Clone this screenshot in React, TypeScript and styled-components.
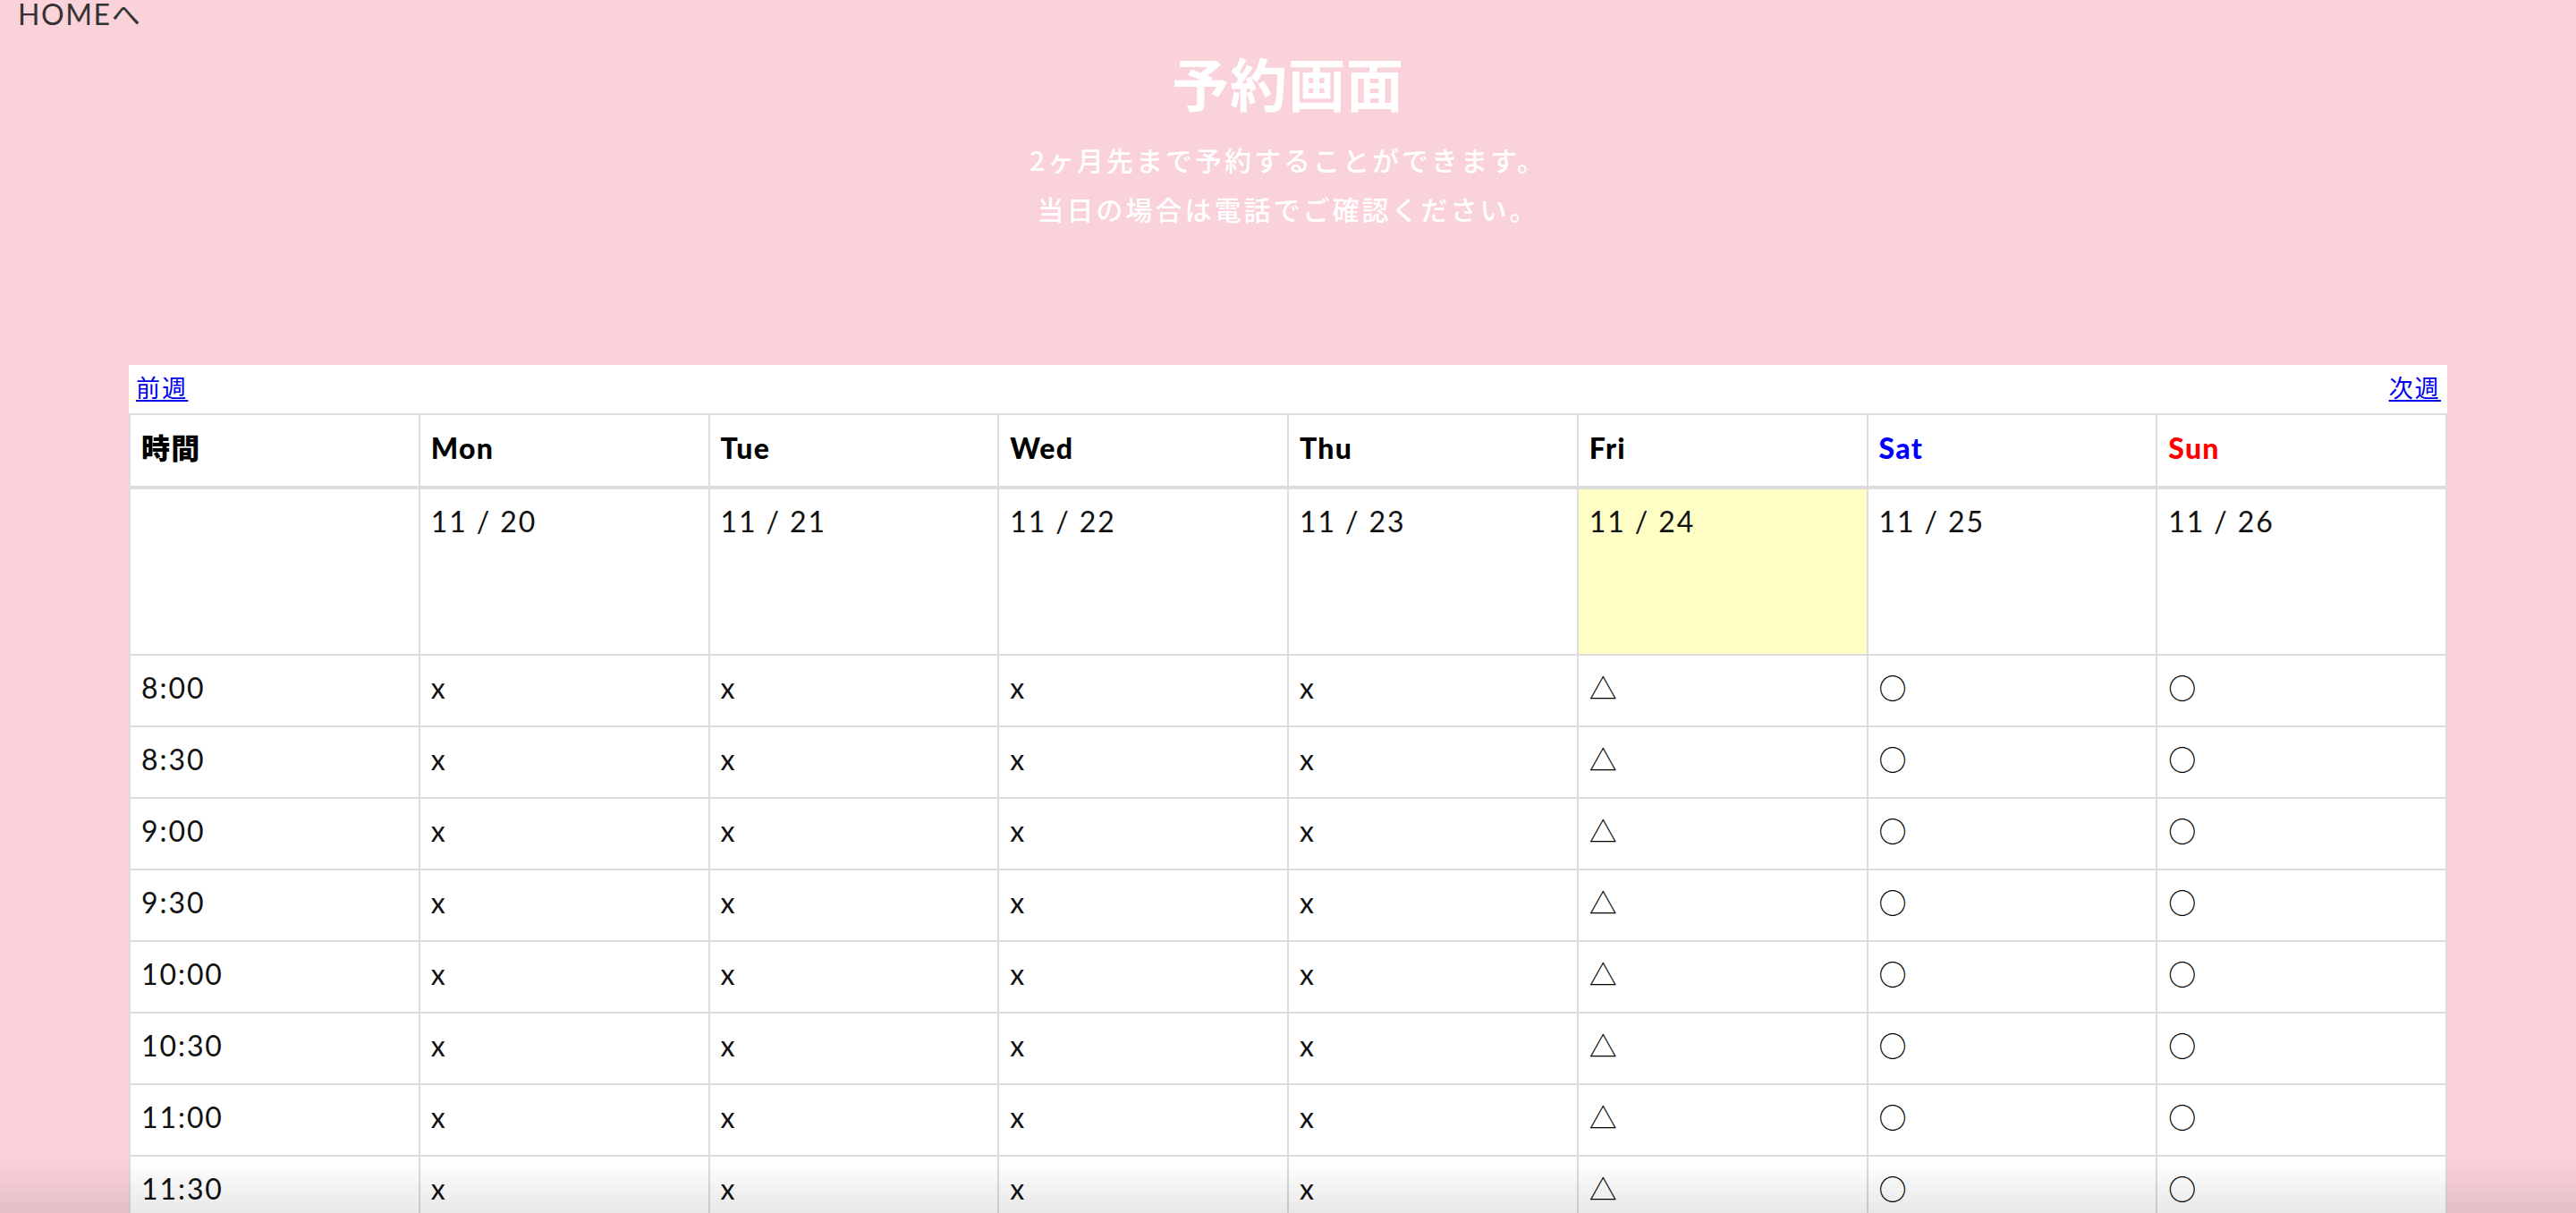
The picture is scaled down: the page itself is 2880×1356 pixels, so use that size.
import styled, { createGlobalStyle } from "styled-components";

const GlobalStyle = createGlobalStyle`
  html, body {
    margin: 0;
    padding: 0;
    background-color: #fad2da;
  }
  body {
    font-family: "Lato", "Noto Sans CJK JP", sans-serif;
    color: #111;
  }
`;

const Page = styled.div`
  min-height: 100vh;
  padding-bottom: 80px;
`;

const HomeLink = styled.a`
  display: inline-block;
  padding-left: 20px;
  font-size: 32px;
  line-height: 32px;
  letter-spacing: 0.05em;
  color: #333;
  text-decoration: none;
`;

const Hero = styled.header`
  text-align: center;
  color: #fff;
  padding: 19px 0 147px;
`;

const Title = styled.h1`
  margin: 0;
  font-family: "Noto Sans CJK JP", sans-serif;
  font-size: 64px;
  line-height: 80px;
  font-weight: 700;
  letter-spacing: 1px;
`;

const Lead = styled.p`
  margin: 20px 0 0;
  font-family: "Noto Sans CJK JP", sans-serif;
  font-size: 30px;
  font-weight: 500;
  line-height: 55px;
  letter-spacing: 0.1em;
`;

const Card = styled.section`
  width: 90%;
  margin: 0 auto;
  background-color: #fff;
`;

const WeekNav = styled.nav`
  height: 54px;
  box-sizing: border-box;
  display: flex;
  align-items: center;
  justify-content: space-between;
  padding: 0 7px 5px 8px;
`;

const WeekLink = styled.a`
  font-family: "Noto Sans CJK JP", sans-serif;
  font-size: 27px;
  letter-spacing: 0.08em;
  color: #0000ee;
  text-decoration: underline;
  text-underline-offset: 3px;
`;

const Table = styled.table`
  width: 100%;
  table-layout: fixed;
  border-collapse: separate;
  border-spacing: 0;
  border-top: 2px solid #dcdcdc;
  border-left: 2px solid #dcdcdc;
`;

const HeadCell = styled.th<{ $color?: string }>`
  text-align: left;
  vertical-align: top;
  padding: 13px 12px 18px;
  font-size: 32px;
  line-height: 48px;
  font-weight: 900;
  letter-spacing: 0.04em;
  color: ${(p) => p.$color || "#000"};
  border-right: 2px solid #dcdcdc;
  border-bottom: 4px solid #dcdcdc;
`;

const Cell = styled.td<{ $today?: boolean; $tall?: boolean }>`
  box-sizing: border-box;
  height: ${(p) => (p.$tall ? "186px" : "80px")};
  text-align: left;
  vertical-align: top;
  padding: 12px 12px 0;
  font-size: 32px;
  line-height: 48px;
  letter-spacing: 0.06em;
  color: #111;
  background-color: ${(p) => (p.$today ? "#ffffc5" : "transparent")};
  border-right: 2px solid #dcdcdc;
  border-bottom: 2px solid #dcdcdc;
`;

const Mark = styled.span`
  font-family: "Noto Sans CJK JP", sans-serif;
  font-size: 31px;
  line-height: 1;
  color: #000;
`;

const WindowShade = styled.div`
  position: fixed;
  left: 0;
  right: 0;
  bottom: 0;
  height: 60px;
  pointer-events: none;
  background: linear-gradient(to bottom, rgba(0, 0, 0, 0), rgba(0, 0, 0, 0.09));
`;

const days = [
  { label: "Mon", date: "11 / 20" },
  { label: "Tue", date: "11 / 21" },
  { label: "Wed", date: "11 / 22" },
  { label: "Thu", date: "11 / 23" },
  { label: "Fri", date: "11 / 24", today: true },
  { label: "Sat", date: "11 / 25", color: "#0000ff" },
  { label: "Sun", date: "11 / 26", color: "#ff0000" },
];

const status = ["x", "x", "x", "x", "△", "○", "○"];

const slots: string[] = [];
for (let h = 8; h <= 18; h++) {
  slots.push(`${h}:00`, `${h}:30`);
}

export default function App() {
  return (
    <>
      <GlobalStyle />
      <Page>
        <HomeLink href="#">HOMEへ</HomeLink>
        <Hero>
          <Title>予約画面</Title>
          <Lead>
            2ヶ月先まで予約することができます。
            <br />
            当日の場合は電話でご確認ください。
          </Lead>
        </Hero>
        <Card>
          <WeekNav>
            <WeekLink href="#">前週</WeekLink>
            <WeekLink href="#">次週</WeekLink>
          </WeekNav>
          <Table>
            <thead>
              <tr>
                <HeadCell>時間</HeadCell>
                {days.map((d) => (
                  <HeadCell key={d.label} $color={d.color}>
                    {d.label}
                  </HeadCell>
                ))}
              </tr>
            </thead>
            <tbody>
              <tr>
                <Cell $tall />
                {days.map((d) => (
                  <Cell key={d.date} $tall $today={d.today}>
                    {d.date}
                  </Cell>
                ))}
              </tr>
              {slots.map((t) => (
                <tr key={t}>
                  <Cell>{t}</Cell>
                  {status.map((s, i) => (
                    <Cell key={i}>{s === "x" ? s : <Mark>{s}</Mark>}</Cell>
                  ))}
                </tr>
              ))}
            </tbody>
          </Table>
        </Card>
      </Page>
      <WindowShade />
    </>
  );
}
